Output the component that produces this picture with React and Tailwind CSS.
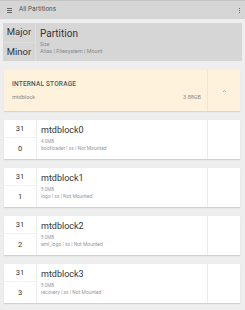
const partitions = [
  { major: 31, minor: 0, name: "mtdblock0", size: "4.0MB", alias: "bootloader | xx | Not Mounted" },
  { major: 31, minor: 1, name: "mtdblock1", size: "8.0MB", alias: "logo | xx | Not Mounted" },
  { major: 31, minor: 2, name: "mtdblock2", size: "8.0MB", alias: "aml_logo | xx | Not Mounted" },
  { major: 31, minor: 3, name: "mtdblock3", size: "8.0MB", alias: "recovery | xx | Not Mounted" },
];

const PartitionCard = ({ item }) => (
  <div className="flex h-[39px] mx-[4px] mr-[5px] bg-white shadow-[0_1px_1px_rgba(0,0,0,0.12)]">
    <div className="w-[33px] flex flex-col border-r border-[#ececec] text-[#333]">
      <div className="h-[18px] pt-[1px] flex items-center justify-center text-[7.5px] border-b border-[#f0f0f0]">
        {item.major}
      </div>
      <div className="flex-1 flex items-center justify-center text-[7.5px]">{item.minor}</div>
    </div>
    <div className="flex-1 pl-[4px] pt-[6px] leading-none">
      <div className="text-[9px] text-[#333]">{item.name}</div>
      <div className="text-[4.5px] text-[#999] mt-[5px]">{item.size}</div>
      <div className="text-[5px] text-[#999] mt-[1.5px]">{item.alias}</div>
    </div>
    <div className="w-[33px] border-l border-[#ececec]" />
  </div>
);

export default function App() {
  return (
    <div className="w-[245px] h-[310px] bg-[#eeeeee] overflow-hidden" style={{ fontFamily: "Roboto, sans-serif" }}>
      {/* Toolbar */}
      <div className="h-[19px] bg-[#d5d5d5] border-t border-[#c4c4c4] flex items-center pl-[7px] pr-[5px]">
        <div className="flex flex-col gap-[1px]">
          <span className="block w-[5px] h-[1px] bg-[#666]" />
          <span className="block w-[5px] h-[1px] bg-[#666]" />
          <span className="block w-[5px] h-[1px] bg-[#666]" />
        </div>
        <span className="ml-[7px] text-[6.5px] text-[#555]">All Partitions</span>
        <div className="ml-auto flex flex-col gap-[1px]">
          <span className="block w-[1px] h-[1px] bg-[#666]" />
          <span className="block w-[1px] h-[1px] bg-[#666]" />
          <span className="block w-[1px] h-[1px] bg-[#666]" />
        </div>
      </div>

      {/* Column header */}
      <div className="mt-[4px] mx-[3px] h-[38px] bg-[#d6d6d6] flex">
        <div className="w-[33px] flex flex-col border-r border-[#dedede] text-[#333]">
          <div className="h-[20px] flex items-center justify-center text-[9.5px] border-b border-[#dedede]">Major</div>
          <div className="flex-1 flex items-center justify-center text-[9.5px]">Minor</div>
        </div>
        <div className="flex-1 pl-[4px] pt-[6px] leading-none">
          <div className="text-[10px] text-[#333]">Partition</div>
          <div className="text-[5px] text-[#888] mt-[3px]">Size</div>
          <div className="text-[5.5px] text-[#888] mt-[2px]">Alias | Filesystem | Mount</div>
        </div>
      </div>

      {/* Storage */}
      <div className="mt-[9px] mx-[4px] mr-[5px] h-[41px] bg-[#fff2dd] flex shadow-[0_1px_1px_rgba(0,0,0,0.1)]">
        <div className="flex-1 pl-[8px] pr-[6px] pt-[11px] leading-none">
          <div className="text-[6.5px] font-medium text-[#555] tracking-[0.2px]">INTERNAL STORAGE</div>
          <div className="flex justify-between mt-[7px] text-[5.5px] text-[#888]">
            <span>mtdblock</span>
            <span>3.88GB</span>
          </div>
        </div>
        <div className="w-[33px] border-l border-[#f3e4cc] flex items-center justify-center text-[#999]">
          <svg width="5" height="4" viewBox="0 0 5 4" fill="none">
            <path d="M1 3 L2.5 1.5 L4 3" stroke="#999" strokeWidth="0.8" />
          </svg>
        </div>
      </div>

      <div className="mt-[9px] flex flex-col gap-[9px]">
        {partitions.map((p) => (
          <PartitionCard key={p.name} item={p} />
        ))}
      </div>
    </div>
  );
}
